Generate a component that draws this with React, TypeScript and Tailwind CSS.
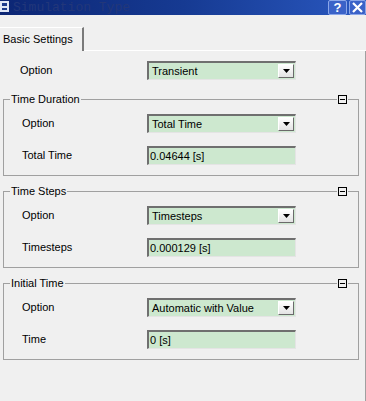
const font = "font-['Tahoma','Liberation_Sans',sans-serif]";

function Combo({ value }: { value: string }) {
  return (
    <div className="flex h-[19px] w-[149px] border-t-2 border-l-2 border-t-[#6f6f6f] border-l-[#6f6f6f] border-b border-r border-b-[#e4e4e4] border-r-[#e4e4e4] bg-[#cde8cf]">
      <div className="flex-1 pl-[3px] text-[11px] leading-[16px] text-black">{value}</div>
      <div className="my-[1px] mr-[1px] flex w-[16px] items-center justify-center border border-t-white border-l-white border-b-[#6a6a6a] border-r-[#6a6a6a] bg-gradient-to-b from-white to-[#e3e3e3]">
        <svg width="7" height="4" viewBox="0 0 7 4">
          <path d="M0 0h7L3.5 4z" fill="#000" />
        </svg>
      </div>
    </div>
  );
}

function Field({ value }: { value: string }) {
  return (
    <div className="h-[19px] w-[149px] border-t-2 border-l-2 border-t-[#6f6f6f] border-l-[#6f6f6f] border-b border-r border-b-[#e4e4e4] border-r-[#e4e4e4] bg-[#cde8cf] pl-[1px] text-[11px] leading-[16px] text-black">
      {value}
    </div>
  );
}

function Row({ label, children, first }: { label: string; children: React.ReactNode; first?: boolean }) {
  return (
    <div className={`flex items-center ${first ? "mt-[8px]" : "mt-[13px]"}`}>
      <div className="w-[143px] pl-[18px] text-[11px] text-black">{label}</div>
      {children}
    </div>
  );
}

function Group({ title, children, top }: { title: string; children: React.ReactNode; top?: boolean }) {
  return (
    <div className={`${top ? "mt-[12px]" : "mt-[8px]"} ml-[3px] w-[356px]`}>
      <div className="flex h-[14px] items-center">
        <div className="h-[1px] w-[7px] bg-[#a0a0a0]" />
        <div className="px-[1px] text-[11px] leading-[14px] text-black">{title}</div>
        <div className="h-[1px] flex-1 bg-[#a0a0a0]" />
        <div className="mx-[1px] flex h-[9px] w-[9px] items-center justify-center border border-black">
          <div className="h-[1px] w-[5px] bg-black" />
        </div>
        <div className="h-[1px] w-[11px] bg-[#a0a0a0]" />
      </div>
      <div className="-mt-[7px] border-x border-b border-[#a0a0a0] pt-[7px] pb-[10px]">
        {children}
      </div>
    </div>
  );
}

export default function App() {
  return (
    <div className={`relative h-[401px] w-[366px] overflow-hidden bg-[#f0f0f0] ${font}`}>
      <div className="flex h-[15px] items-center bg-gradient-to-r from-[#0c2674] via-[#163a92] to-[#2a58c0]">
        <svg width="10" height="12" viewBox="0 0 10 12" className="-mt-[2px]">
          <rect x="0" y="0" width="9" height="11" fill="#dfe6f5" />
          <rect x="2" y="2" width="5" height="3" fill="#1b3a8c" />
          <rect x="2" y="7" width="5" height="2" fill="#1b3a8c" />
        </svg>
        <div className="ml-[3px] font-['Liberation_Mono',monospace] text-[13px] leading-[15px] text-[#22377a]">Simulation Type</div>
        <div className="flex-1" />
        <div className="flex h-[15px] w-[19px] items-center justify-center rounded-[2px] border border-[#8aa6e8] bg-[#3a62c8] text-[13px] font-bold leading-[13px] text-white">?</div>
        <div className="ml-[2px] flex h-[15px] w-[17px] items-center justify-center rounded-[2px] border border-[#8aa6e8] bg-[#3a62c8]">
          <svg width="11" height="11" viewBox="0 0 11 11">
            <path d="M1 1L10 10M10 1L1 10" stroke="#fff" strokeWidth="2.2" />
          </svg>
        </div>
      </div>

      <div className="mt-[12px] flex h-[24px]">
        <div className="flex h-[24px] w-[84px] items-center border-t border-t-white border-r-2 border-r-[#7a7a7a] pl-[3px] text-[11px] text-black">
          Basic Settings
        </div>
        <div className="flex-1 self-end border-b border-b-white" />
      </div>

      <div className="h-[360px] border-r border-r-[#a0a0a0] bg-[#f0f0f0]">
        <div className="flex items-center pt-[10px]">
          <div className="w-[147px] pl-[20px] text-[11px] text-black">Option</div>
          <Combo value="Transient" />
        </div>

        <Group title="Time Duration" top>
          <Row label="Option" first>
            <Combo value="Total Time" />
          </Row>
          <Row label="Total Time">
            <Field value="0.04644 [s]" />
          </Row>
        </Group>

        <Group title="Time Steps">
          <Row label="Option" first>
            <Combo value="Timesteps" />
          </Row>
          <Row label="Timesteps">
            <Field value="0.000129 [s]" />
          </Row>
        </Group>

        <Group title="Initial Time">
          <Row label="Option" first>
            <Combo value="Automatic with Value" />
          </Row>
          <Row label="Time">
            <Field value="0 [s]" />
          </Row>
        </Group>
      </div>
    </div>
  );
}
